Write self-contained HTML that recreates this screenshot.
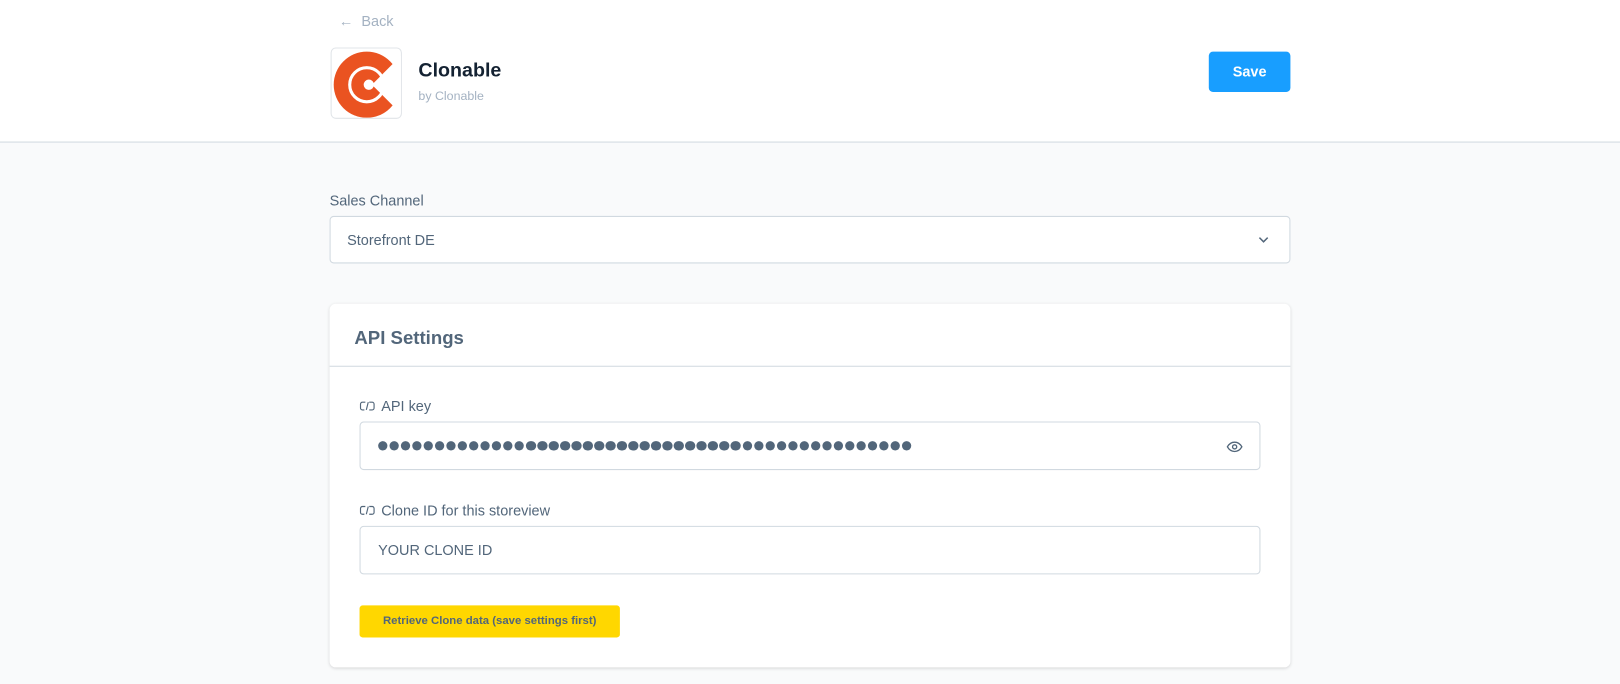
<!DOCTYPE html>
<html><head><meta charset="utf-8"><style>
*{box-sizing:border-box;margin:0;padding:0}
body{width:1620px;height:684px;overflow:hidden;background:#f9fafb;font-family:"Liberation Sans",sans-serif;color:#52667a}
#w{position:absolute;left:0;top:0;width:1568px;height:662px;transform:scale(1.03316);transform-origin:0 0}
.hdr{position:absolute;left:0;top:0;width:1568px;height:138px;background:#fff;border-bottom:1px solid #d1d9e0}
.back{position:absolute;left:328px;top:12px;font-size:14px;color:#a4b2c2}
.logo{position:absolute;left:320px;top:46px;width:69px;height:69px;border:1px solid #e0e4e8;border-radius:5px;background:#fff;overflow:hidden}
.title{position:absolute;left:405px;top:58px;font-size:19px;font-weight:bold;color:#142232}
.by{position:absolute;left:405px;top:86px;font-size:12px;color:#a4b2c2}
.save{position:absolute;left:1170px;top:50px;width:79px;height:39px;background:#189eff;border-radius:4px;color:#fff;font-weight:bold;font-size:14px;text-align:center;line-height:39px}
.lbl{position:absolute;font-size:14px;color:#52667a}
.sel{position:absolute;left:319px;top:209px;width:930px;height:46px;border:1px solid #d1d9e0;border-radius:4px;background:#fff;font-size:14px;line-height:44px;padding-left:16px;color:#52667a}
.card{position:absolute;left:319px;top:294px;width:930px;height:352px;background:#fff;border-radius:6px;box-shadow:0 1px 3px rgba(0,0,0,.15)}
.ch{height:61px;border-bottom:1px solid #d1d9e0;font-size:18px;font-weight:bold;color:#52667a;padding:23px 0 0 24px}
.inp{position:absolute;left:29px;width:872px;height:47px;border:1px solid #d1d9e0;border-radius:4px;background:#fff}
.dots{position:absolute;left:17px;top:18px;display:flex}
.dots i{display:block;width:9.3px;height:9.3px;border-radius:50%;background:#52667a;margin-right:1.72px}
.btn{position:absolute;left:29px;top:292px;width:252px;height:31px;background:#ffd700;border-radius:3px;font-size:11px;font-weight:bold;color:#52667a;text-align:center;line-height:31px}
</style></head><body><div id="w">
<div class="hdr">
<div class="back">← &nbsp;Back</div>
<div class="logo"><svg width="69" height="69" viewBox="0 0 69 69">
<circle cx="34" cy="35" r="32" fill="#ea5321"/>
<circle cx="34" cy="35" r="16.5" fill="none" stroke="#fff" stroke-width="3"/>
<circle cx="36" cy="35" r="5" fill="#fff"/>
<path d="M39 35 L72 2 L72 68 Z" fill="#fff"/>
</svg></div>
<div class="title">Clonable</div>
<div class="by">by Clonable</div>
<div class="save">Save</div>
</div>
<div class="lbl" style="left:319px;top:186px">Sales Channel</div>
<div class="sel">Storefront DE<svg style="position:absolute;right:20px;top:18px" width="10" height="8" viewBox="0 0 10 8"><path d="M1 2l4 4 4-4" fill="none" stroke="#52667a" stroke-width="1.5"/></svg></div>
<div class="card">
<div class="ch">API Settings</div>
<div class="lbl" style="left:29px;top:91px"><svg width="15" height="10" viewBox="0 0 16 10" style="margin-right:6px"><path d="M6 1H3a2 2 0 0 0-2 2v4a2 2 0 0 0 2 2h2M10 1h3a2 2 0 0 1 2 2v4a2 2 0 0 1-2 2h-3M9 1L7 9" fill="none" stroke="#52667a" stroke-width="1.2"/></svg>API key</div>
<div class="inp" style="top:114px"><div class="dots"><i></i><i></i><i></i><i></i><i></i><i></i><i></i><i></i><i></i><i></i><i></i><i></i><i></i><i></i><i></i><i></i><i></i><i></i><i></i><i></i><i></i><i></i><i></i><i></i><i></i><i></i><i></i><i></i><i></i><i></i><i></i><i></i><i></i><i></i><i></i><i></i><i></i><i></i><i></i><i></i><i></i><i></i><i></i><i></i><i></i><i></i><i></i></div>
<svg style="position:absolute;right:16px;top:18px" width="16" height="11" viewBox="0 0 16 11"><path d="M1 5.5C3 2 5.5 1 8 1s5 1 7 4.5C13 9 10.5 10 8 10S3 9 1 5.5Z" fill="none" stroke="#52667a" stroke-width="1.3"/><circle cx="8" cy="5.5" r="2" fill="none" stroke="#52667a" stroke-width="1.3"/></svg></div>
<div class="lbl" style="left:29px;top:192px"><svg width="15" height="10" viewBox="0 0 16 10" style="margin-right:6px"><path d="M6 1H3a2 2 0 0 0-2 2v4a2 2 0 0 0 2 2h2M10 1h3a2 2 0 0 1 2 2v4a2 2 0 0 1-2 2h-3M9 1L7 9" fill="none" stroke="#52667a" stroke-width="1.2"/></svg>Clone ID for this storeview</div>
<div class="inp" style="top:215px;font-size:14px;line-height:45px;padding-left:17px">YOUR CLONE ID</div>
<div class="btn">Retrieve Clone data (save settings first)</div>
</div>
</div></body></html>
